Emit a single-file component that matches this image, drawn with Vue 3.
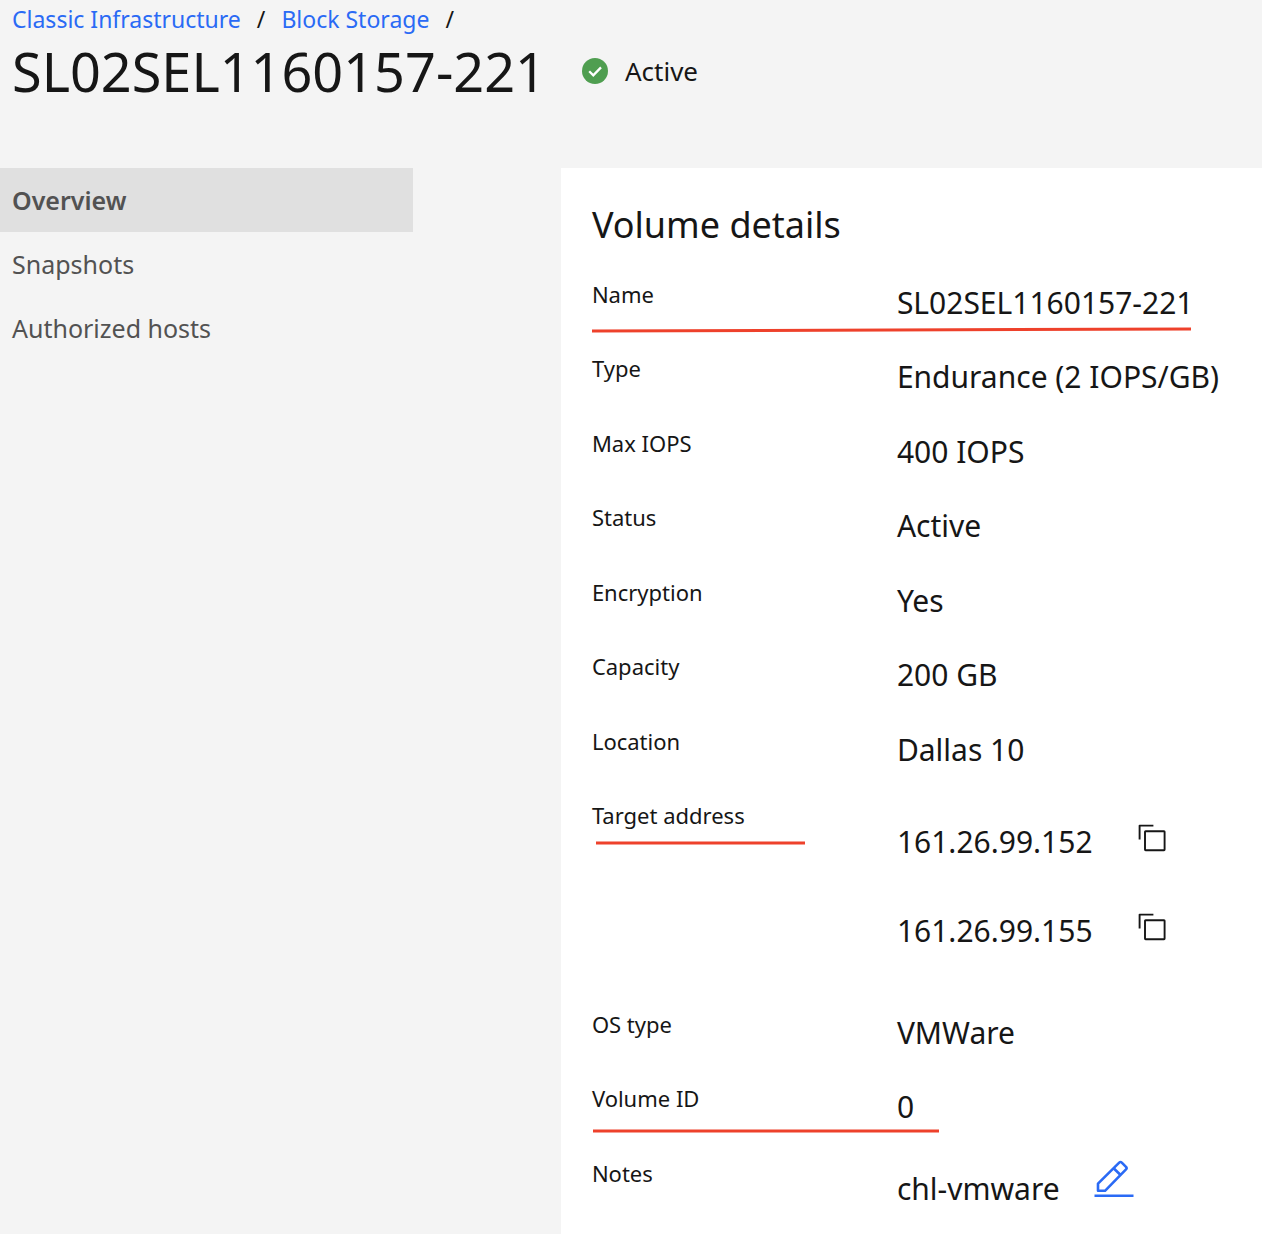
<script setup>
const navItems = [
  { label: 'Overview', current: true },
  { label: 'Snapshots', current: false },
  { label: 'Authorized hosts', current: false },
]

const details = [
  { label: 'Name', value: 'SL02SEL1160157-221', mark: { x1: 0, y1: 55, x2: 599, y2: 53 } },
  { label: 'Type', value: 'Endurance (2 IOPS/GB)' },
  { label: 'Max IOPS', value: '400 IOPS' },
  { label: 'Status', value: 'Active' },
  { label: 'Encryption', value: 'Yes' },
  { label: 'Capacity', value: '200 GB' },
  { label: 'Location', value: 'Dallas 10' },
  {
    label: 'Target address',
    addresses: ['161.26.99.152', '161.26.99.155'],
    mark: { x1: 4, y1: 46, x2: 213, y2: 46 },
  },
  { label: 'OS type', value: 'VMWare' },
  { label: 'Volume ID', value: '0', mark: { x1: 1, y1: 51, x2: 347, y2: 51 } },
  { label: 'Notes', value: 'chl-vmware', editable: true },
]
</script>

<template>
  <div class="page">
    <header class="header">
      <nav class="breadcrumb" aria-label="Breadcrumb">
        <a href="#">Classic Infrastructure</a>
        <span class="slash">/</span>
        <a href="#">Block Storage</a>
        <span class="slash">/</span>
      </nav>
      <div class="title-row">
        <h1>SL02SEL1160157-221</h1>
        <div class="status">
          <svg viewBox="0 0 26 26" width="26" height="26" aria-hidden="true">
            <circle cx="13" cy="13" r="13" fill="#4f9e50" />
            <path d="M7.2 13.2 L11.3 17.3 L19 9.4" fill="none" stroke="#fff" stroke-width="2.3" />
          </svg>
          <span>Active</span>
        </div>
      </div>
    </header>

    <div class="body">
      <nav class="side" aria-label="Volume">
        <a
          v-for="item in navItems"
          :key="item.label"
          href="#"
          class="side-link"
          :class="{ current: item.current }"
        >{{ item.label }}</a>
      </nav>

      <main class="panel">
        <h2>Volume details</h2>
        <dl class="details">
          <div
            v-for="row in details"
            :key="row.label"
            class="row"
            :class="{ tall: row.addresses }"
          >
            <dt>{{ row.label }}</dt>
            <dd v-if="row.addresses" class="addresses">
              <div v-for="ip in row.addresses" :key="ip" class="address">
                <span>{{ ip }}</span>
                <button type="button" class="icon-button" :aria-label="'Copy ' + ip">
                  <svg viewBox="0 0 28 28" width="28" height="28" fill="none" stroke="#161616" stroke-width="1.9" stroke-linejoin="round">
                    <path d="M1.6 15.4 V1.6 H15.4" />
                    <rect x="7" y="7.2" width="19.6" height="19" rx="0.6" />
                  </svg>
                </button>
              </div>
            </dd>
            <dd v-else-if="row.editable" class="editable">
              <span>{{ row.value }}</span>
              <button type="button" class="icon-button" aria-label="Edit notes">
                <svg viewBox="0 0 40 38" width="40" height="38" fill="none" stroke="#2a6af5" stroke-width="2.6">
                  <path d="M0.5 35.8 H39.5" />
                  <path d="M4 30.8 V23.6 L25.2 2.6 Q26.5 1.4 27.8 2.6 L32 6.8 Q33.2 8.2 32 9.4 L11 30.8 Z" stroke-linejoin="round" />
                  <path d="M19.6 8.2 L26.6 15" />
                </svg>
              </button>
            </dd>
            <dd v-else>{{ row.value }}</dd>
            <svg v-if="row.mark" class="mark" width="600" height="60" aria-hidden="true">
              <line v-bind="row.mark" stroke="#ee412b" stroke-width="3" />
            </svg>
          </div>
        </dl>
      </main>
    </div>
  </div>
</template>

<style>
body {
  margin: 0;
  background: #f4f4f4;
}
</style>

<style scoped>
.page {
  display: flex;
  flex-direction: column;
  min-height: 100vh;
  font-family: "Noto Sans", "Open Sans", sans-serif;
  color: #161616;
  background: #f4f4f4;
}

.header {
  box-sizing: border-box;
  height: 168px;
  padding: 3px 12px 0;
}

.breadcrumb {
  display: flex;
  gap: 16px;
  font-size: 23px;
  line-height: 32px;
}

.breadcrumb a {
  color: #2a6af5;
  text-decoration: none;
}

.title-row {
  display: flex;
  align-items: center;
  gap: 36px;
}

h1 {
  margin: 0;
  font-size: 54px;
  font-weight: 400;
  line-height: 72px;
}

.status {
  display: flex;
  align-items: center;
  gap: 17px;
  font-size: 26px;
  line-height: 36px;
}

.body {
  display: grid;
  grid-template-columns: 4fr 5fr;
  flex: 1;
}

.side {
  display: flex;
  flex-direction: column;
  width: 413px;
}

.side-link {
  padding: 14px 12px;
  font-size: 25px;
  line-height: 36px;
  color: #525252;
  text-decoration: none;
}

.side-link.current {
  font-weight: 600;
  background: #e0e0e0;
}

.panel {
  padding: 31px 0 0 31px;
  background: #fff;
}

h2 {
  margin: 0 0 25px;
  font-size: 36px;
  font-weight: 400;
  line-height: 52px;
}

.details {
  margin: 0;
}

.row {
  position: relative;
  display: grid;
  grid-template-columns: 305px 1fr;
  align-items: start;
  height: 74px;
}

.row:nth-child(even) {
  height: 75px;
}

.row.tall {
  height: 209px;
}

dt {
  padding-top: 2px;
  font-size: 22px;
  line-height: 32px;
}

dd {
  margin: 0;
  padding-top: 7px;
  font-size: 30px;
  line-height: 40px;
}

.addresses {
  display: flex;
  flex-direction: column;
  gap: 49px;
  padding-top: 25px;
}

.address,
.editable {
  display: flex;
  gap: 45px;
}

.editable {
  gap: 34px;
  padding-top: 14px;
}

.icon-button {
  display: flex;
  height: 28px;
  margin-top: 2px;
  padding: 0;
  border: 0;
  background: none;
}

.editable .icon-button {
  height: 38px;
  margin-top: -9px;
}

.mark {
  position: absolute;
  top: 0;
  left: 0;
  pointer-events: none;
}
</style>
